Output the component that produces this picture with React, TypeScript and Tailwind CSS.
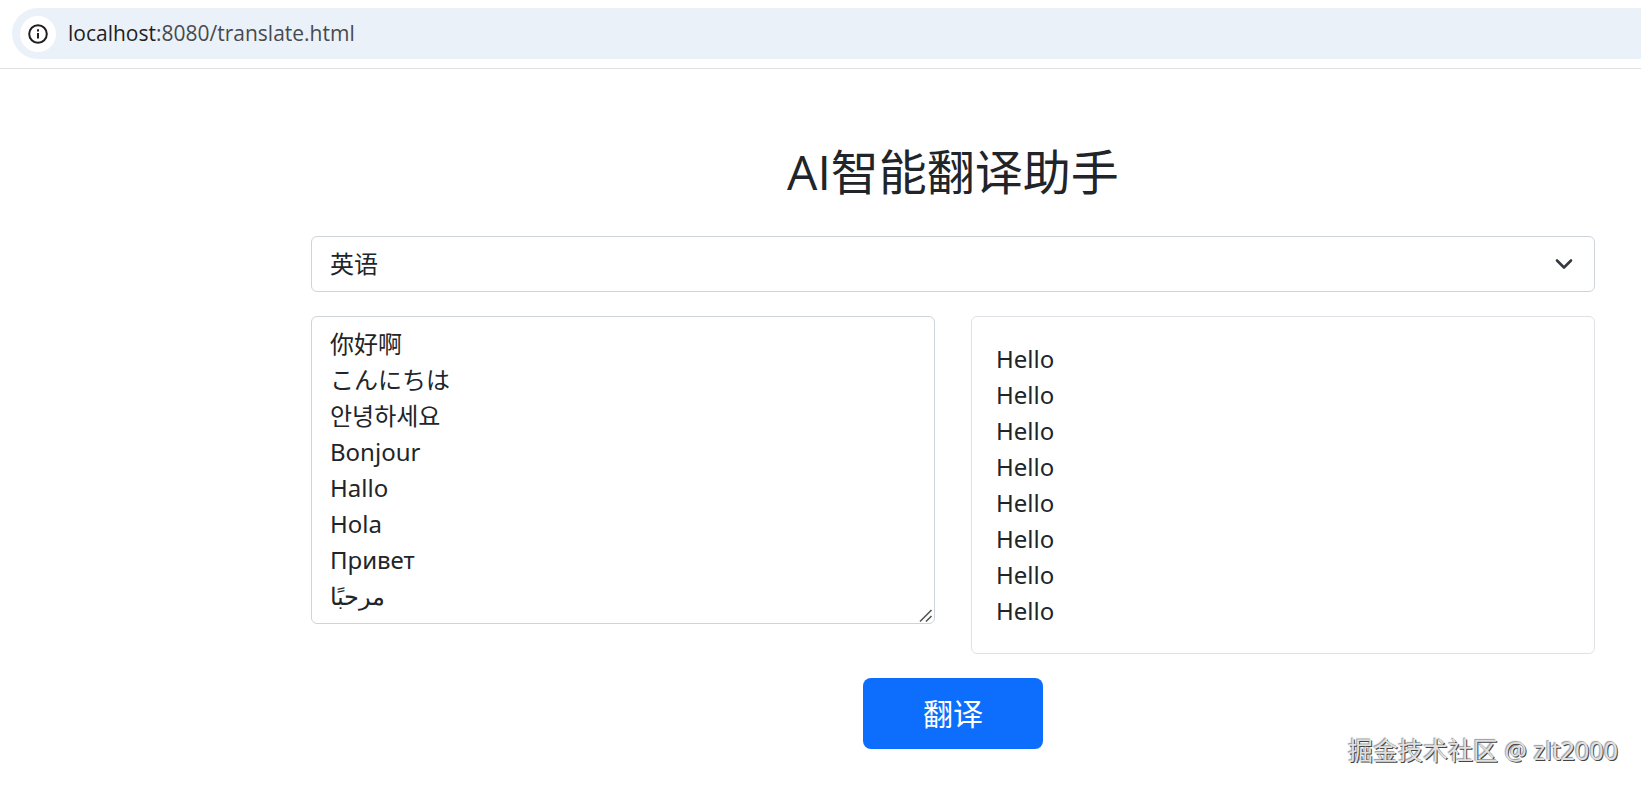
import { useState } from "react";

const languages = ["英语", "中文", "日语", "韩语", "法语", "德语", "西班牙语", "俄语", "阿拉伯语"];

const sourceText = ["你好啊", "こんにちは", "안녕하세요", "Bonjour", "Hallo", "Hola", "Привет", "مرحبًا"].join("\n");

const results = Array.from({ length: 8 }, () => "Hello");

function AddressBar() {
  return (
    <header className="border-b border-[#dfe1e5] pt-2 pb-[9px] pl-3">
      <div className="flex h-[51px] items-center gap-3 rounded-l-full bg-[#ebf1f9] pl-2">
        <button
          type="button"
          aria-label="查看网站信息"
          className="flex size-9 items-center justify-center rounded-full bg-white"
        >
          <svg viewBox="0 0 20 20" className="size-5" fill="none" stroke="#1f1f1f" strokeWidth="2">
            <circle cx="10" cy="10" r="8.8" />
            <path d="M10 9v5.6M10 5.2v2.2" />
          </svg>
        </button>
        <p className="pb-0.5 font-['Open_Sans',sans-serif] text-[21px] leading-8 text-[#474a4f]">
          <span className="text-[#1f1f1f]">localhost</span>:8080/translate.html
        </p>
      </div>
    </header>
  );
}

export default function App() {
  const [language, setLanguage] = useState(languages[0]);
  const [text, setText] = useState(sourceText);

  return (
    <div className="relative min-h-screen bg-white font-['Noto_Sans','Noto_Sans_CJK_SC',sans-serif] text-[#212529]">
      <AddressBar />
      <main className="pt-[73px] pr-[46px] pb-[38px] pl-[311px]">
        <h1 className="mb-[34px] text-center font-['Open_Sans','Noto_Sans_CJK_SC',sans-serif] text-5xl leading-[60px] font-normal">
          AI智能翻译助手
        </h1>
        <form onSubmit={(e) => e.preventDefault()}>
          <div className="relative mb-6">
            <select
              aria-label="目标语言"
              value={language}
              onChange={(e) => setLanguage(e.target.value)}
              className="block h-14 w-full appearance-none rounded-md border border-[#ced4da] bg-white px-[18px] text-2xl leading-9"
            >
              {languages.map((name) => (
                <option key={name}>{name}</option>
              ))}
            </select>
            <svg
              viewBox="0 0 18 18"
              className="pointer-events-none absolute top-[19px] right-[22px] size-[18px]"
              fill="none"
              stroke="#343a40"
              strokeWidth="2.6"
              strokeLinecap="round"
              strokeLinejoin="round"
            >
              <path d="m2 5.500 7 7 7-7" />
            </svg>
          </div>
          <div className="mb-6 grid grid-cols-2 items-start gap-9">
            <div className="relative">
              <textarea
                aria-label="原文"
                rows={8}
                value={text}
                onChange={(e) => setText(e.target.value)}
                className="block w-full resize-none overflow-hidden rounded-md border border-[#ced4da] bg-white px-[18px] py-[9px] text-2xl leading-9"
              />
              <svg
                viewBox="0 0 14 14"
                className="pointer-events-none absolute right-0.5 bottom-px size-3.5"
                fill="none"
                stroke="#555"
                strokeWidth="1.6"
              >
                <path d="M1 12.500 12.500 1M7 12.500 12.500 7" />
              </svg>
            </div>
            <output className="block rounded-md border border-[#dee2e6] p-6 text-2xl leading-9">
              {results.map((line, i) => (
                <p key={i}>{line}</p>
              ))}
            </output>
          </div>
          <div className="flex justify-center">
            <button type="submit" className="rounded-lg bg-[#0d6efd] px-[60px] py-[13px] text-3xl leading-[45px] text-white">
              翻译
            </button>
          </div>
        </form>
      </main>
      <p className="absolute right-[23px] bottom-[19px] text-[25px] leading-9 text-[#e0e0e0] [text-shadow:1px_1px_0_#444,-1px_-1px_1px_#999]">
        掘金技术社区 @ zlt2000
      </p>
    </div>
  );
}
